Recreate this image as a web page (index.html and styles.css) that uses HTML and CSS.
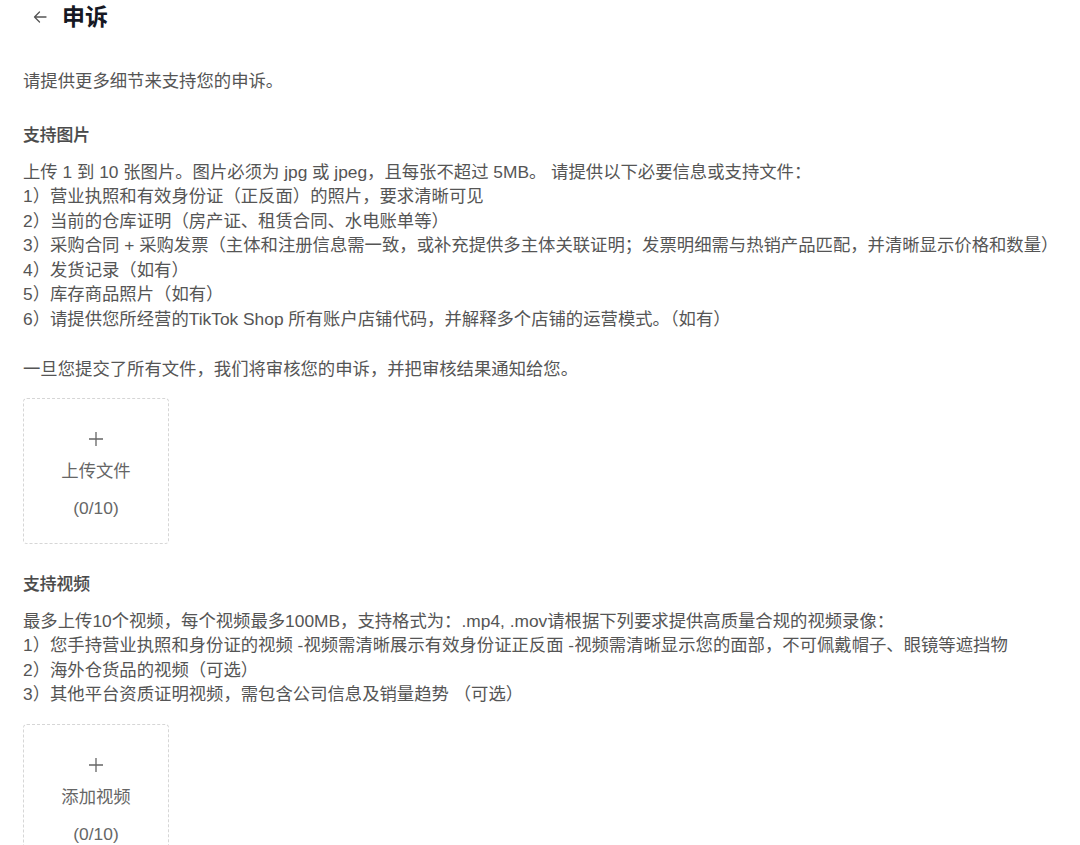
FILE: index.html
```html
<!DOCTYPE html>
<html lang="zh-CN">
<head>
<meta charset="utf-8">
<title>申诉</title>
<link rel="stylesheet" href="styles.css">
</head>
<body>
<div class="page">
  <header class="header">
    <svg class="back" width="16" height="16" viewBox="0 0 16 16" fill="none" stroke="#555" stroke-width="1.3" stroke-linecap="round" stroke-linejoin="round"><path d="M14 8H2.5M7.5 3L2.5 8l5 5"/></svg>
    <h1 class="title">申诉</h1>
  </header>

  <p class="intro">请提供更多细节来支持您的申诉。</p>

  <h2 class="section-title first">支持图片</h2>
  <div class="text-block">
    <div>上传 1 到 10 张图片。图片必须为 jpg 或 jpeg，且每张不超过 5MB。 请提供以下必要信息或支持文件：</div>
    <div>1）营业执照和有效身份证（正反面）的照片，要求清晰可见</div>
    <div>2）当前的仓库证明（房产证、租赁合同、水电账单等）</div>
    <div>3）采购合同 + 采购发票（主体和注册信息需一致，或补充提供多主体关联证明；发票明细需与热销产品匹配，并清晰显示价格和数量）</div>
    <div>4）发货记录（如有）</div>
    <div>5）库存商品照片（如有）</div>
    <div>6）请提供您所经营的TikTok Shop 所有账户店铺代码，并解释多个店铺的运营模式。（如有）</div>
  </div>
  <p class="note">一旦您提交了所有文件，我们将审核您的申诉，并把审核结果通知给您。</p>

  <div class="upload">
    <svg class="plus" width="16" height="16" viewBox="0 0 16 16" fill="none" stroke="#666" stroke-width="1.3"><path d="M8 1v14M1 8h14"/></svg>
    <div class="upload-label">上传文件</div>
    <div class="upload-count">(0/10)</div>
  </div>

  <h2 class="section-title second">支持视频</h2>
  <div class="text-block">
    <div>最多上传10个视频，每个视频最多100MB，支持格式为：.mp4, .mov请根据下列要求提供高质量合规的视频录像：</div>
    <div>1）您手持营业执照和身份证的视频 -视频需清晰展示有效身份证正反面 -视频需清晰显示您的面部，不可佩戴帽子、眼镜等遮挡物</div>
    <div>2）海外仓货品的视频（可选）</div>
    <div>3）其他平台资质证明视频，需包含公司信息及销量趋势 （可选）</div>
  </div>

  <div class="upload video">
    <svg class="plus" width="16" height="16" viewBox="0 0 16 16" fill="none" stroke="#666" stroke-width="1.3"><path d="M8 1v14M1 8h14"/></svg>
    <div class="upload-label">添加视频</div>
    <div class="upload-count">(0/10)</div>
  </div>
</div>
</body>
</html>
```

FILE: styles.css
```css
* { box-sizing: border-box; }
html, body { margin: 0; padding: 0; background: #fff; }
body {
  font-family: "Liberation Sans", "Noto Sans CJK SC", sans-serif;
  color: #555;
  font-size: 17.35px;
  line-height: 24.5px;
}
.page { padding: 0 23px; }
.header {
  height: 34px;
  display: flex;
  align-items: center;
  gap: 14px;
  padding-left: 9px;
}
.back { flex: none; }
.title {
  margin: 0;
  font-size: 23px;
  font-weight: 700;
  color: #161823;
  line-height: 34px;
}
.intro { margin: 35px 0 0; }
.section-title {
  margin: 0;
  font-size: 16.8px;
  font-weight: 500;
  color: #4a4a4a;
  line-height: 24px;
  -webkit-text-stroke: 0.15px #4a4a4a;
}
.section-title.first { margin-top: 30px; }
.section-title.second { margin-top: 29px; }
.text-block { margin-top: 12px; }
.note { margin: 26px 0 0; }
.upload {
  width: 146px;
  height: 146px;
  border: 1px dashed #d6d6d6;
  border-radius: 4px;
  margin-top: 16px;
  display: flex;
  flex-direction: column;
  align-items: center;
  padding-top: 32px;
}
.upload.video { margin-top: 17px; }
.plus { display: block; }
.upload-label { margin-top: 12px; line-height: 24px; color: #666; }
.upload-count { margin-top: 13px; line-height: 24px; color: #666; }
```
